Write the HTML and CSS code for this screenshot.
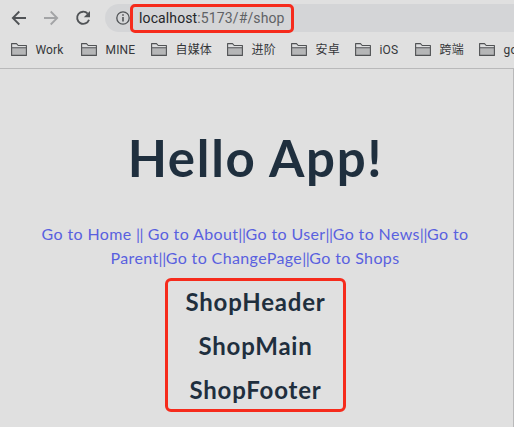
FILE: index.html
```html
<!DOCTYPE html>
<html lang="en">
<head>
<meta charset="utf-8">
<title>Hello App!</title>
<link rel="stylesheet" href="styles.css">
</head>
<body>
<svg class="defs" width="0" height="0">
  <symbol id="folder" viewBox="0 0 16 13">
    <path d="M.6 12.4V.6H5.5L7.2 2.5H15.4V12.4Z" fill="#dedfe0"/>
    <path d="M1 5H15V12H1Z" fill="#b5b6b7"/>
    <path d="M.6 12.4V.6H5.5L7.2 2.5H15.4V12.4ZM1 4.8H15" fill="none" stroke="#505254" stroke-width="1.1" stroke-linejoin="round"/>
  </symbol>
</svg>
<header class="browser">
  <div class="toolbar">
    <svg class="nav" viewBox="0 0 16 16"><path d="M15 8H2M8.3 1.5L1.8 8L8.3 14.5" fill="none" stroke="#505356" stroke-width="1.8"/></svg>
    <svg class="nav" viewBox="0 0 16 16"><path d="M1 8H14M7.7 1.5L14.2 8L7.7 14.5" fill="none" stroke="#a3a4a6" stroke-width="1.8"/></svg>
    <svg class="nav" viewBox="0 0 16 16"><path d="M12.7 3.6A6.1 6.1 0 1 0 14 9.8" fill="none" stroke="#505356" stroke-width="1.9"/><path d="M15 1V7.2H8.8Z" fill="#505356"/></svg>
    <div class="address">
      <svg class="info" viewBox="0 0 14 14"><circle cx="7" cy="7" r="6.2" fill="none" stroke="#505356" stroke-width="1.3"/><path d="M7 6V10.6M7 3.2V4.8" stroke="#505356" stroke-width="1.6"/></svg>
      <div class="url"><span class="host">localhost</span>:5173/#/shop</div>
    </div>
  </div>
  <nav class="bookmarks">
    <a><svg><use href="#folder"/></svg><span>Work</span></a>
    <a><svg><use href="#folder"/></svg><span>MINE</span></a>
    <a class="media"><svg><use href="#folder"/></svg><span>自媒体</span></a>
    <a class="two-char"><svg><use href="#folder"/></svg><span>进阶</span></a>
    <a class="two-char"><svg><use href="#folder"/></svg><span>安卓</span></a>
    <a class="ios"><svg><use href="#folder"/></svg><span>iOS</span></a>
    <a class="two-char"><svg><use href="#folder"/></svg><span>跨端</span></a>
    <a><svg><use href="#folder"/></svg><span>go</span></a>
  </nav>
</header>
<main class="app">
  <h1>Hello App!</h1>
  <div class="links">
    <div><a>Go to Home</a> <a class="bar">||</a> <a>Go to About</a><a class="bar">||</a><a>Go to User</a><a class="bar">||</a><a>Go to News</a><a class="bar">||</a><a>Go to</a></div>
    <div><a>Parent</a><a class="bar">||</a><a>Go to ChangePage</a><a class="bar">||</a><a>Go to Shops</a></div>
  </div>
  <section class="shop">
    <h2>ShopHeader</h2>
    <h2>ShopMain</h2>
    <h2>ShopFooter</h2>
  </section>
</main>
</body>
</html>
```

FILE: styles.css
```css
* { box-sizing: border-box; }
body { margin: 0; width: 514px; height: 427px; overflow: hidden; background: #e0e0e0; font-family: Lato, "Noto Sans CJK SC", sans-serif; }
.defs { display: block; }
.browser { height: 69px; border-bottom: 1px solid #b9b9ba; overflow: hidden; }
.toolbar { display: flex; align-items: center; height: 32px; margin-top: 2px; padding-left: 11px; }
.nav { width: 16px; height: 16px; margin-right: 16px; flex: none; }
.address { display: flex; align-items: center; flex: 1; height: 28px; margin-left: -2px; padding-left: 11px; background: #d4d5d7; border-radius: 14px 0 0 14px; }
.info { width: 14px; height: 14px; flex: none; }
.url { width: 164px; height: 29px; padding-left: 6px; border: 3px solid #f62b1c; border-radius: 5px; font: 14px/22px Roboto, sans-serif; letter-spacing: .12px; color: #606265; white-space: nowrap; }
.host { color: #242629; }
.bookmarks { display: flex; align-items: center; height: 31px; padding-left: 11px; font: 12px/18px Roboto, "Noto Sans CJK SC", sans-serif; letter-spacing: .15px; color: #35373a; white-space: nowrap; }
.bookmarks a { display: flex; align-items: center; gap: 8.5px; flex: none; width: 70px; }
.bookmarks svg { width: 16px; height: 13px; flex: none; }
.bookmarks .media { width: 76px; }
.bookmarks .two-char { width: 64px; }
.bookmarks .ios { width: 60px; }
.app { height: 358px; border-right: 1px solid #b9b9ba; text-align: center; color: #1f2f3e; overflow: hidden; }
h1 { margin: 61px 0 0; padding-right: 2px; font-size: 51px; line-height: 56px; font-weight: 700; letter-spacing: 1.7px; }
.links { margin-top: 36px; padding-right: 3px; font-size: 16px; line-height: 24px; letter-spacing: .37px; color: #5960df; white-space: nowrap; }
.bar { letter-spacing: -.4px; }
.shop { width: 181px; height: 134px; margin: 8px 0 0 165px; border: 3px solid #f62b1c; border-radius: 6px; }
h2 { position: relative; top: -1px; margin: 0; font-size: 24px; line-height: 44px; height: 44px; font-weight: 700; letter-spacing: .8px; }
```
